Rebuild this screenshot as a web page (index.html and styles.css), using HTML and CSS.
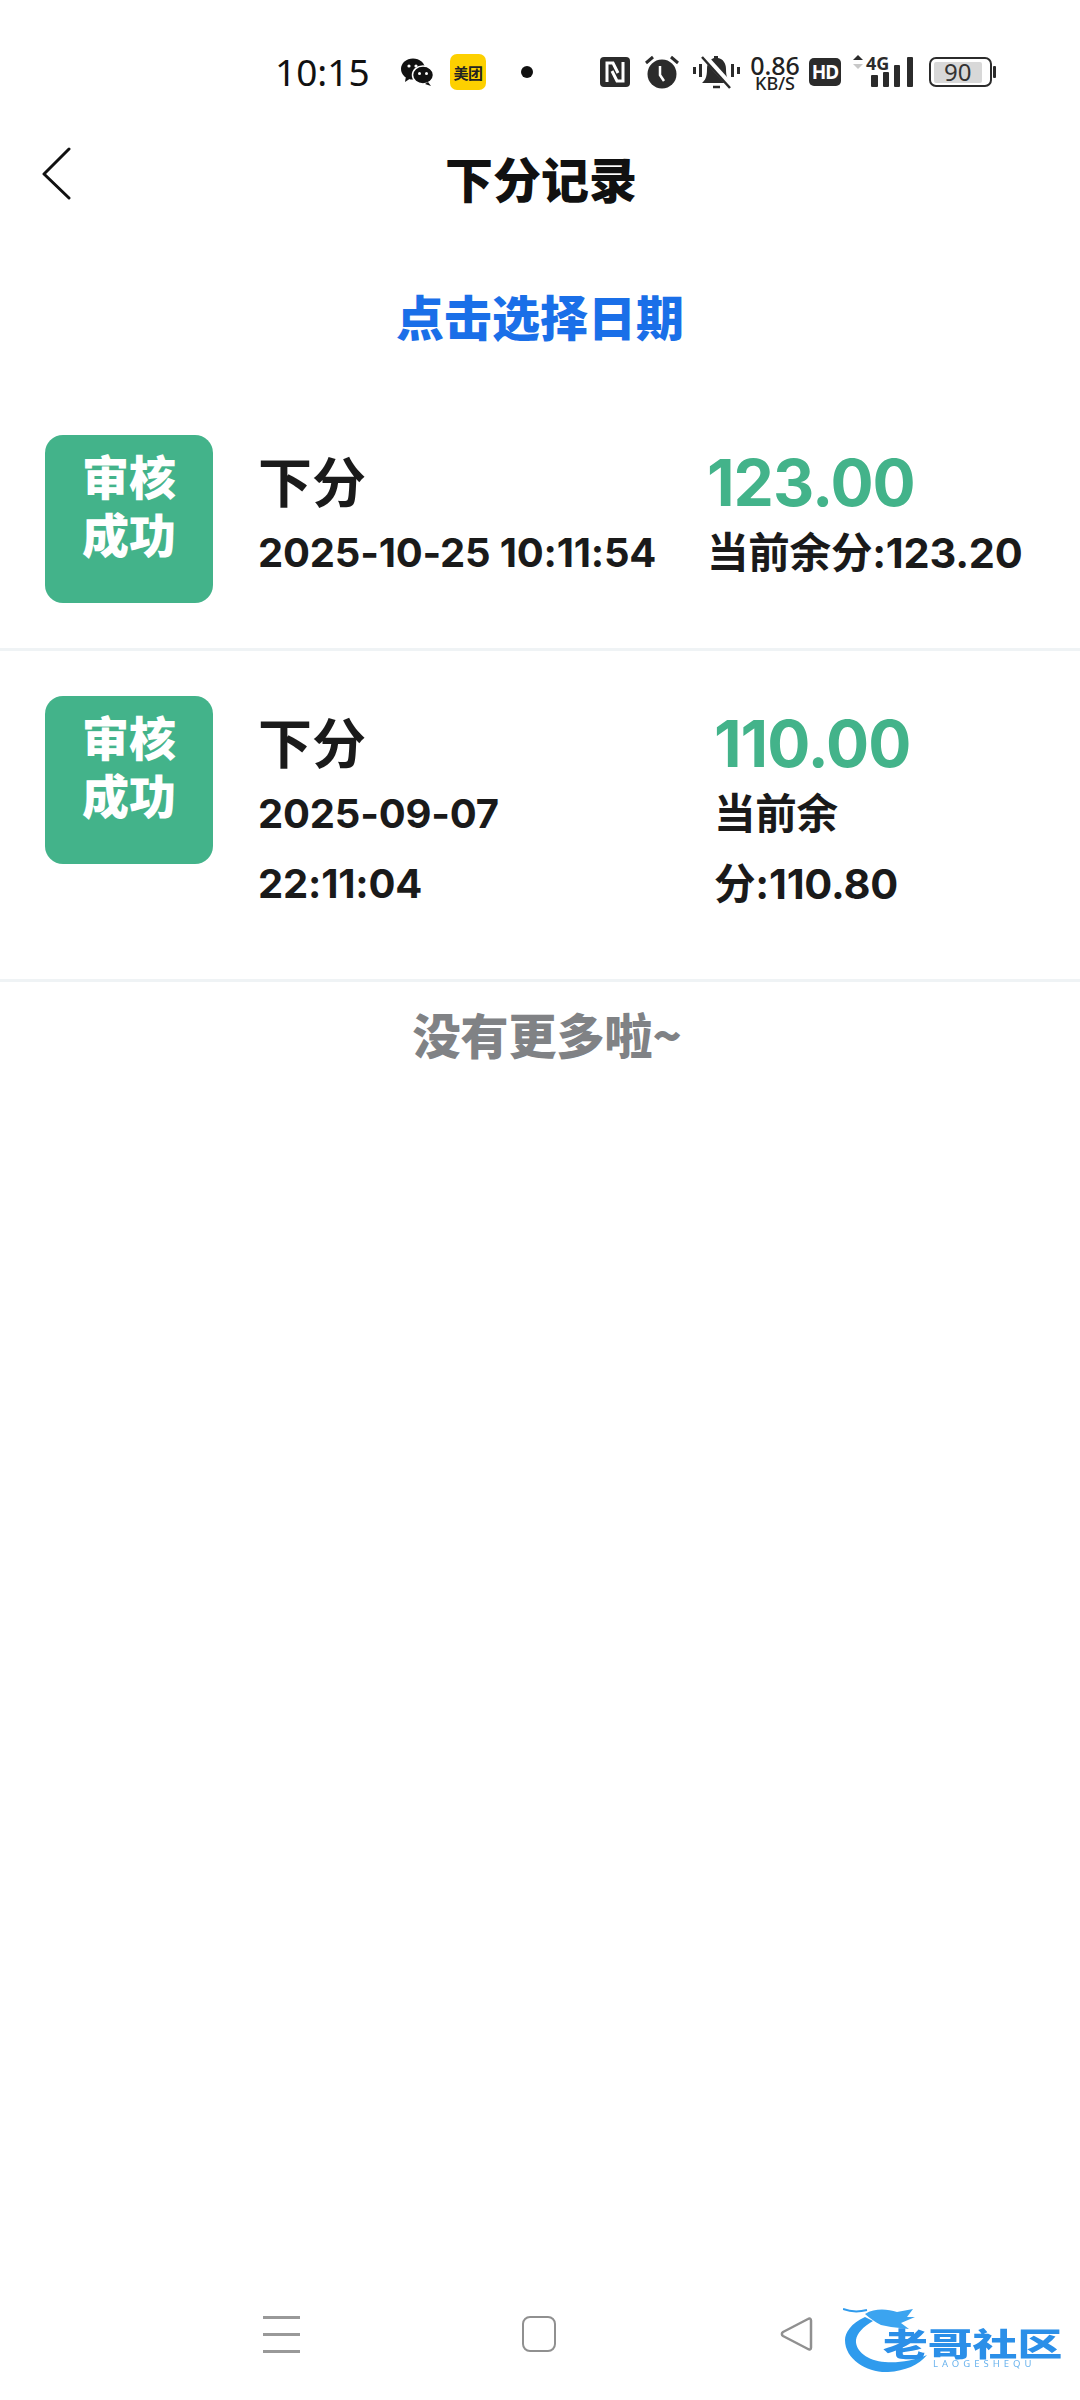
FILE: index.html
```html
<!DOCTYPE html>
<html lang="zh-CN">
<head>
    <meta charset="UTF-8">
    <meta name="viewport" content="width=device-width, initial-scale=1.0">
    <title>下分记录</title>
    <link rel="stylesheet" href="styles.css">
</head>
<body>
    <div class="status-bar">
        <span class="clock">10:15</span>
        <svg class="ic-wechat" viewBox="0 0 34 28" width="34" height="28">
            <ellipse cx="13" cy="11" rx="12" ry="10.500" fill="#111"/>
            <path d="M6 18l-1 6 6-4z" fill="#111"/>
            <ellipse cx="23" cy="17" rx="10.500" ry="9" fill="#111" stroke="#fff" stroke-width="1.500"/>
            <path d="M28 24l3 4-6-2z" fill="#111"/>
            <circle cx="9" cy="8" r="1.600" fill="#fff"/>
            <circle cx="16" cy="8" r="1.600" fill="#fff"/>
            <circle cx="19.500" cy="15.500" r="1.500" fill="#fff"/>
            <circle cx="26.500" cy="15.500" r="1.500" fill="#fff"/>
        </svg>
        <span class="ic-meituan">美团</span>
        <span class="dot"></span>
        <svg class="ic-nfc" viewBox="0 0 30 30" width="30" height="30">
            <rect width="30" height="30" rx="4" fill="#2b2b2b"/>
            <path d="M7 25V6h6l5 10M23 5v19h-6l-5-10" fill="none" stroke="#fff" stroke-width="3"/>
        </svg>
        <svg class="ic-alarm" viewBox="0 0 34 34" width="34" height="34">
            <circle cx="17" cy="19" r="14.500" fill="#2b2b2b"/>
            <path d="M1 8l7-6M33 8l-7-6" stroke="#2b2b2b" stroke-width="3" fill="none"/>
            <path d="M15 11v9l4 6" stroke="#fff" stroke-width="2.500" fill="none"/>
        </svg>
        <svg class="ic-mute" viewBox="0 0 48 36" width="48" height="36">
            <path d="M1.500 13v7M7.500 10v13M39.500 10v13M45.500 13v7" stroke="#2b2b2b" stroke-width="3" fill="none"/>
            <path d="M9 29c3-3 5-5 5-14 0-7 4-10 7-11V2h4v2c5 1 8 5 8 11 0 9 2 11 5 14z" fill="#2b2b2b"/>
            <path d="M20 33h7" stroke="#2b2b2b" stroke-width="2.500"/>
            <path d="M11 2l28 31" stroke="#fff" stroke-width="6"/>
            <path d="M9 3l28 31" stroke="#2b2b2b" stroke-width="2.500"/>
        </svg>
        <span class="net-speed"><b>0.86</b><i>KB/S</i></span>
        <span class="ic-hd">HD</span>
        <svg class="ic-signal" viewBox="0 0 62 44" width="62" height="44">
            <path d="M0 10l5-5 5 5z" fill="#2b2b2b"/>
            <path d="M0 14l5 5 5-5z" fill="#c8c8c8"/>
            <text x="13" y="20" class="signal-label">4G</text>
            <rect x="18" y="25" width="7" height="12" rx="1" fill="#2b2b2b"/>
            <rect x="30" y="22" width="6" height="15" rx="1" fill="#2b2b2b"/>
            <rect x="41" y="15" width="6" height="22" rx="1" fill="#2b2b2b"/>
            <rect x="54" y="7" width="6" height="30" rx="1" fill="#2b2b2b"/>
        </svg>
        <span class="battery">
            <span class="battery-body"><span class="battery-fill">90</span></span>
            <span class="battery-cap"></span>
        </span>
    </div>

    <header class="title-bar">
        <svg class="back" viewBox="0 0 32 54" width="32" height="54">
            <path d="M28 3L3 28l25 24" fill="none" stroke="#111" stroke-width="3" stroke-linecap="round" stroke-linejoin="round"/>
        </svg>
        <h1>下分记录</h1>
    </header>

    <div class="date-pick">点击选择日期</div>

    <ul class="records">
        <li class="record">
            <div class="tag">审核<br>成功</div>
            <div class="info">
                <div class="name">下分</div>
                <div class="line">2025-10-25 10:11:54</div>
            </div>
            <div class="money">
                <div class="amount">123.00</div>
                <div class="line">当前余分:123.20</div>
            </div>
        </li>
        <li class="record wrapped">
            <div class="tag">审核<br>成功</div>
            <div class="info">
                <div class="name">下分</div>
                <div class="line">2025-09-07 22:11:04</div>
            </div>
            <div class="money">
                <div class="amount">110.00</div>
                <div class="line">当前余分:110.80</div>
            </div>
        </li>
    </ul>

    <div class="no-more">没有更多啦~</div>

    <nav class="nav-bar">
        <span class="nav-menu"><i></i><i></i><i></i></span>
        <span class="nav-home"></span>
        <svg class="nav-back" viewBox="0 0 34 36" width="34" height="36">
            <path d="M31 4.500c0-2-1.500-2.500-3-1.500L3 16c-1.500 1-1.500 3 0 4l25 13c1.500 1 3 .5 3-1.500z" fill="none" stroke="#909090" stroke-width="2.500" stroke-linejoin="round"/>
        </svg>
    </nav>

    <div class="watermark">
        <svg class="mark-dragon" viewBox="0 0 90 72" width="90" height="72">
            <path d="M22 12C8 18 2 28 2 35c0 20 23 33 43 32 17-1 31-7 39-17-14 6-29 8-42 7-17-1-30-11-29-22 1-7 7-13 17-19z" fill="#2f9bed"/>
            <path d="M0 4c8 3 16 3 24 1" fill="none" stroke="#2f9bed" stroke-width="2"/>
            <path d="M22 9C32 3 44 4 54 7l16-3-6 8h8l-14 6 8 6-18-2-10-2C32 17 28 14 22 9z" fill="#3ba4f0"/>
        </svg>
        <b class="mark-name">老哥社区</b>
        <i class="mark-sub">LAOGESHEQU</i>
    </div>
</body>
</html>
```

FILE: styles.css
```css
* {
    box-sizing: border-box;
}
html, body {
    height: 100%;
}
body {
    margin: 0;
    background: #fff;
    color: #1a1a1a;
    font-family: "Noto Sans CJK SC", "Noto Sans", sans-serif;
    display: flex;
    flex-direction: column;
    position: relative;
}

/* status bar */
.status-bar {
    height: 144px;
    padding-left: 275px;
    display: flex;
    align-items: center;
    flex-shrink: 0;
}
.clock {
    width: 125px;
    padding-bottom: 2px;
    font-family: "Noto Sans", sans-serif;
    font-size: 37px;
    color: #111;
}
.ic-meituan {
    width: 36px;
    height: 36px;
    margin-left: 16px;
    background: #fdd000;
    border-radius: 7px;
    font-size: 15px;
    font-weight: 700;
    color: #222;
    display: flex;
    align-items: center;
    justify-content: center;
    white-space: nowrap;
    letter-spacing: -.5px;
}
.dot {
    width: 12px;
    height: 12px;
    margin-left: 35px;
    border-radius: 50%;
    background: #111;
}
.ic-nfc {
    margin-left: 67px;
}
.ic-alarm {
    margin-left: 15px;
}
.ic-mute {
    margin-left: 14px;
}
.net-speed {
    margin-left: 8px;
    width: 52px;
    display: flex;
    flex-direction: column;
    align-items: center;
    font-family: "Noto Sans", sans-serif;
    color: #222;
}
.net-speed b {
    font-weight: 500;
    font-size: 25px;
    line-height: 22px;
}
.net-speed i {
    font-style: normal;
    font-weight: 500;
    font-size: 18px;
    line-height: 15px;
}
.ic-hd {
    width: 32px;
    height: 28px;
    margin-left: 8px;
    background: #2b2b2b;
    border-radius: 5px;
    color: #fff;
    font-family: "Noto Sans", sans-serif;
    font-size: 19px;
    font-weight: 700;
    letter-spacing: -1px;
    display: flex;
    align-items: center;
    justify-content: center;
}
.ic-signal {
    margin-left: 12px;
}
.signal-label {
    font-family: "Noto Sans", sans-serif;
    font-size: 18px;
    font-weight: 700;
    fill: #2b2b2b;
}
.battery {
    margin-left: 14px;
    display: flex;
    align-items: center;
    gap: 1px;
}
.battery-body {
    width: 63px;
    height: 30px;
    border: 2.500px solid #2b2b2b;
    border-radius: 7px;
    padding: 2.500px;
    display: block;
}
.battery-fill {
    display: block;
    width: 90%;
    height: 100%;
    background: #d8d8d8;
    border-radius: 2px;
    font-family: "Noto Sans", sans-serif;
    font-size: 24px;
    line-height: 20px;
    text-align: center;
    color: #333;
}
.battery-cap {
    width: 3px;
    height: 12px;
    background: #2b2b2b;
    border-radius: 1px;
}

/* title */
.title-bar {
    height: 66px;
    padding-left: 2px;
    position: relative;
    display: flex;
    align-items: center;
    justify-content: center;
    flex-shrink: 0;
}
.back {
    position: absolute;
    left: 41px;
    top: 2px;
}
.title-bar h1 {
    margin: 0;
    font-size: 48px;
    line-height: 66px;
    font-weight: 900;
    color: #111;
}

.date-pick {
    margin-top: 74px;
    height: 62px;
    line-height: 62px;
    text-align: center;
    font-size: 48px;
    font-weight: 900;
    color: #1a6fe8;
    flex-shrink: 0;
}

/* records */
.records {
    list-style: none;
    margin: 44px 0 0;
    padding: 0;
}
.record {
    display: flex;
    align-items: flex-start;
    padding: 45px 0 0 45px;
    border-bottom: 3px solid #eff3f5;
}
.tag {
    width: 168px;
    height: 168px;
    flex-shrink: 0;
    padding-top: 11px;
    background: #43b38a;
    border-radius: 18px;
    color: #fff;
    font-size: 47px;
    font-weight: 900;
    line-height: 58px;
    text-align: center;
}
.info {
    width: 449px;
    margin-left: 45px;
    padding: 13px 0 60px;
    flex-shrink: 0;
}
.wrapped .info {
    width: 456px;
    padding-right: 180px;
}
.name {
    font-size: 54px;
    font-weight: 700;
    line-height: 64px;
    margin-bottom: 6px;
}
.line {
    font-family: Inter, "Noto Sans CJK SC", sans-serif;
    font-size: 40px;
    font-weight: 700;
    letter-spacing: -.2px;
    line-height: 70px;
    color: #1a1a1a;
}
.money {
    flex: 1;
    padding-top: 13px;
}
.money .line {
    font-size: 41.500px;
}
.wrapped .money {
    flex: none;
    width: 230px;
}
.amount {
    font-family: Inter, sans-serif;
    font-size: 64px;
    font-weight: 700;
    letter-spacing: -1px;
    line-height: 64px;
    padding-top: 3px;
    margin-bottom: 3px;
    color: #43b38a;
}

.no-more {
    margin-top: 19px;
    padding-left: 14px;
    text-align: center;
    font-size: 48px;
    line-height: 64px;
    font-weight: 900;
    color: #808285;
}

/* bottom nav */
.nav-bar {
    margin-top: auto;
    height: 132px;
    padding-left: 263px;
    display: flex;
    align-items: center;
    flex-shrink: 0;
}
.nav-menu {
    width: 37px;
    display: flex;
    flex-direction: column;
    gap: 14px;
}
.nav-menu i {
    display: block;
    height: 3px;
    background: #999;
}
.nav-home {
    width: 34px;
    height: 36px;
    margin-left: 222px;
    border: 2.500px solid #909090;
    border-radius: 8px;
}
.nav-back {
    margin-left: 224px;
}

/* site watermark sits over the nav bar */
.watermark {
    position: absolute;
    left: 843px;
    top: 2305px;
    width: 225px;
    height: 72px;
    filter: blur(.5px);
}
.mark-dragon {
    display: block;
}
.mark-name {
    position: absolute;
    left: 40px;
    top: 17px;
    font-size: 32px;
    line-height: 40px;
    font-weight: 900;
    color: #2b8fe8;
    white-space: nowrap;
    transform: scaleX(1.4);
    transform-origin: left center;
}
.mark-sub {
    position: absolute;
    left: 90px;
    top: 54px;
    font-style: normal;
    font-family: "Noto Sans", sans-serif;
    font-size: 9.500px;
    line-height: 10px;
    letter-spacing: 4px;
    color: #6bb4ee;
}
```
